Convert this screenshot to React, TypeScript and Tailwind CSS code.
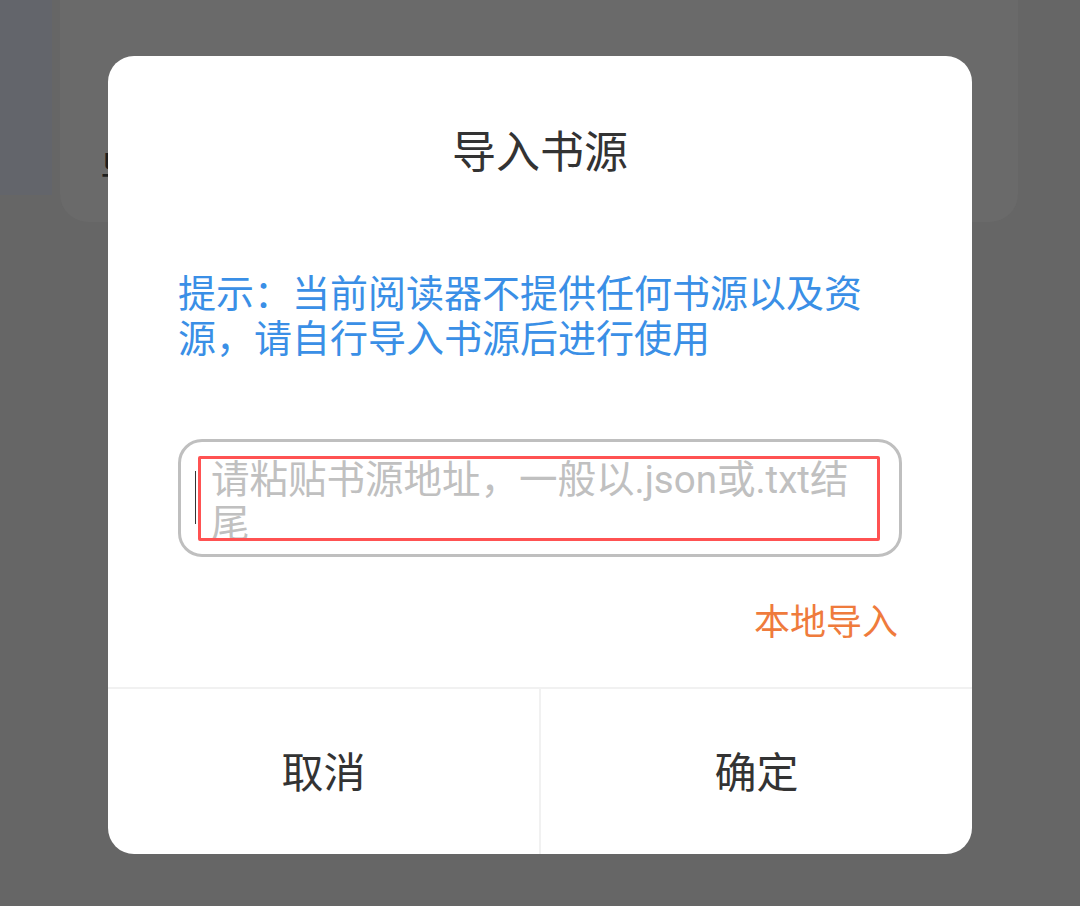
import React from 'react';

const FONT = { fontFamily: 'Roboto, "Noto Sans CJK SC", "Noto Sans", sans-serif' };

// Page sitting behind the dimmed overlay
const BackdropPage: React.FC = () => (
  <div className="flex h-full w-full items-start">
    <div className="h-[195px] w-[52px] bg-[#63656b]" />
    <div className="ml-[8px] h-[222px] w-[958px] rounded-b-[28px] bg-[#6a6a6a] pl-[40px] pt-[148px]">
      <span className="text-[40px] leading-[48px] text-[#1e1e1e]">导入书源</span>
    </div>
  </div>
);

const ImportSourceDialog: React.FC = () => (
  <div className="absolute left-[108px] top-[56px] flex w-[864px] flex-col overflow-hidden rounded-[26px] bg-white">
    <div className="pt-[71px] text-center text-[44px] leading-[53px] text-[#333333]">导入书源</div>

    <div className="mt-[92px] pl-[70px] pr-[90px] text-[38px] leading-[45px] text-[#3a8fe6]">
      提示：当前阅读器不提供任何书源以及资源，请自行导入书源后进行使用
    </div>

    <div className="relative mx-[70px] mt-[77px] h-[118px] rounded-[24px] border-[3px] border-[#bfbfbf]">
      <div className="h-[96px] overflow-hidden pl-[30px] pr-[30px] pt-[16px] text-[38.5px] leading-[44px] text-[#c0c0c0]">
        请粘贴书源地址，一般以.json或.txt结尾
      </div>
      {/* caret */}
      <div className="absolute left-[14px] top-[29px] h-[53px] w-[1px] bg-[#333333]" />
      {/* highlight frame */}
      <div className="absolute left-[17px] top-[14px] h-[85px] w-[682px] rounded-[2px] border-[3px] border-[#ff5252]" />
    </div>

    <div className="mt-[44px] pr-[74px] text-right text-[36px] leading-[44px] text-[#ef7b3c]">本地导入</div>

    <div className="mt-[42px] h-[2px] bg-[#f1f1f1]" />

    <div className="flex h-[165px]">
      <button className="flex flex-1 items-center justify-center pt-[4px] text-[42px] text-[#333333]">取消</button>
      <div className="w-[2px] bg-[#f1f1f1]" />
      <button className="flex flex-1 items-center justify-center pt-[4px] text-[42px] text-[#333333]">确定</button>
    </div>
  </div>
);

export default function App() {
  return (
    <div className="relative h-[906px] w-[1080px] overflow-hidden bg-[#666666]" style={FONT}>
      <BackdropPage />
      <ImportSourceDialog />
    </div>
  );
}
